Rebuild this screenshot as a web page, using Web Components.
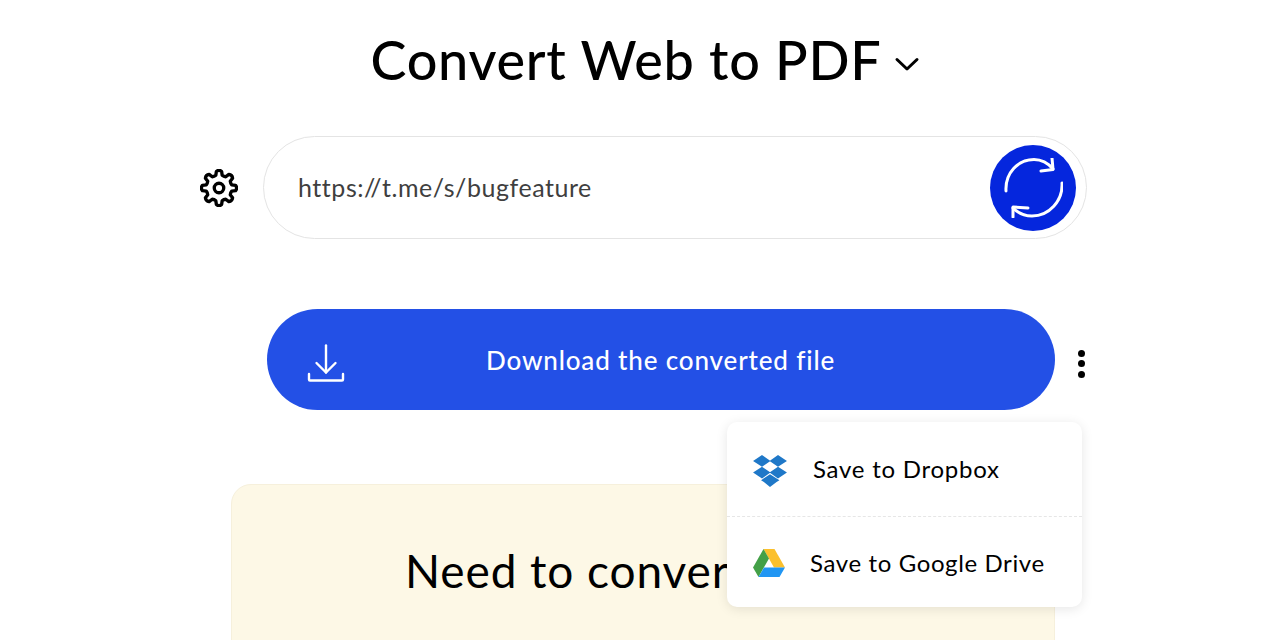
<!DOCTYPE html>
<html lang="en"><head><meta charset="utf-8"><title>Convert Web to PDF</title>
<style>
html,body{margin:0;padding:0;height:640px;overflow:hidden;background:#fff;font-family:Lato,"Noto Sans",sans-serif;color:#000}
</style></head><body>
<convert-page></convert-page>
<template id="t-page"><style>
:host{display:block;position:relative;width:1280px;height:640px;overflow:hidden}
.col{display:flex;flex-direction:column}
.url{margin:29px 0 0 200px}
.dl{margin:70px 0 0 267px}
.card{margin:74px 0 0 231px}
</style>
<div class="col">
<title-bar>Convert Web to PDF</title-bar>
<url-row class="url">https://t.me/s/bugfeature</url-row>
<download-row class="dl">Download the converted file</download-row>
<promo-card class="card">Need to convert</promo-card>
</div>
<save-menu></save-menu>
</template>
<template id="t-title"><style>
:host{display:flex;justify-content:center;align-items:center;height:107px;padding:12px 0 0 10px;box-sizing:border-box;gap:12px}
h1{margin:0;font:500 54px/95px Lato,"Noto Sans",sans-serif;color:#000;letter-spacing:.75px;white-space:nowrap}
svg{display:block;margin-top:9px}
</style><h1><slot></slot></h1>
<svg width="26" height="26" viewBox="0 0 26 26" fill="none" stroke="#000" stroke-width="3" stroke-linecap="round" stroke-linejoin="round"><path d="M3 8.500l10 9.500 10-9.500"/></svg></template>
<template id="t-url"><style>
:host{display:flex;align-items:center;gap:25px}
svg{display:block;flex:none}
.box{box-sizing:border-box;width:824px;height:103px;border:1px solid #e4e4e4;border-radius:52px;display:flex;align-items:center;justify-content:space-between;padding:0 10px 0 34px;background:#fff}
.t{font:400 25px/1 Lato,"Noto Sans",sans-serif;color:#3f3f3f;letter-spacing:.55px;margin-top:-1px}
.go{width:86px;height:86px;border-radius:50%;background:#0526dd;display:flex;align-items:center;justify-content:center}
</style>
<svg width="38" height="38" viewBox="0 0 24 24" fill="none" stroke="#000" stroke-width="2.1" stroke-linejoin="round"><path id="gear"/><circle cx="12" cy="12" r="3"/></svg>
<div class="box"><span class="t"><slot></slot></span><div class="go">
<svg width="60" height="60" viewBox="0 0 60 60" fill="none" stroke="#fff" stroke-width="3" stroke-linecap="round" stroke-linejoin="round"><path d="M3 33C2 15 15 1.500 31 1.500c7 0 14 3.500 19 9.500"/><path d="M49 0l1 11.500-12 1.500"/><path d="M59 25c1 18-13 33-30 33-7 0-14-3-19-8"/><path d="M10 59V49l15 1"/></svg>
</div></div></template>
<template id="t-dl"><style>
:host{display:flex;align-items:center}
.b{box-sizing:border-box;width:788px;height:101px;border-radius:51px;background:#2350e6;display:flex;align-items:center;position:relative;color:#fff}
svg.i{display:block;margin:6px 0 0 40px;flex:none}
.t{position:absolute;left:219px;top:0;font:500 26px/102px Lato,"Noto Sans",sans-serif;letter-spacing:.85px;white-space:nowrap}
.d{display:flex;flex-direction:column;gap:3.500px;margin:8px 0 0 23px}
.d i{display:block;width:7px;height:7px;border-radius:50%;background:#000}
</style><div class="b">
<svg class="i" width="38" height="38" viewBox="0 0 38 38" fill="none" stroke="#fff" stroke-width="2.4" stroke-linecap="round" stroke-linejoin="round"><path d="M19 1.500v27"/><path d="M9.500 19l9.500 9.500 9.500-9.500"/><path d="M2 30v5.500a1 1 0 0 0 1 1h32a1 1 0 0 0 1-1V30"/></svg>
<span class="t"><slot></slot></span></div>
<div class="d"><i></i><i></i><i></i></div></template>
<template id="t-card"><style>
:host{display:block;box-sizing:border-box;width:824px;height:260px;background:#fdf8e6;border:1px solid #f6f0dc;border-radius:20px;padding:55px 0 0 173px;font:400 46px/62px Lato,"Noto Sans",sans-serif;color:#000;letter-spacing:.9px;white-space:nowrap}
</style><slot></slot></template>
<template id="t-menu"><style>
:host{display:block;position:absolute;left:727px;top:422px;width:355px;height:185px;background:#fff;border-radius:10px;box-shadow:0 2px 12px rgba(0,0,0,.1)}
</style>
<save-item style="--pad:26px;--gap:26px;--h:95px;--ls:.75px"><svg slot="icon" width="34" height="32" viewBox="0 0 36 34" fill="#1f78c8" style="margin-top:3px"><path d="M9.500 0L0 6.300l9.500 6.200 9-6.200zM26.500 0l-9 6.300 9 6.200L36 6.300zM0 18.700l9.500 6.300 9-6.300-9-6.200zM26.500 12.500l-9 6.200 9 6.300 9.500-6.300zM18 20.500l-9.500 6.200 3 2L18 34l7-5.300 3-2z"/></svg>Save to Dropbox</save-item>
<save-item style="--pad:26px;--gap:25px;--h:92px;--border:none;"><svg slot="icon" width="32" height="28" viewBox="0 0 32 28" style="margin-top:0"><path d="M10.500 0h11l10.500 18.500H21z" fill="#fbc02d"/><path d="M10.500 0L0 18.500 5.500 28 16 9.500z" fill="#43a047"/><path d="M5.500 28h21L32 18.500H11z" fill="#2196f3"/></svg>Save to Google Drive</save-item>
</template>
<template id="t-item"><style>
:host{display:flex;align-items:center;box-sizing:border-box;height:var(--h);padding-left:var(--pad);gap:var(--gap);font:400 24px/1 Lato,"Noto Sans",sans-serif;letter-spacing:var(--ls,.62px);color:#000;white-space:nowrap;border-bottom:var(--border,1px dashed #e6e6e6)}
::slotted(svg){display:block;flex:none}
</style><slot name="icon"></slot><span><slot></slot></span></template>
<script>
function gearPath(){
  var p=function(r,a){a=(a-90)*Math.PI/180;return (12+r*Math.cos(a)).toFixed(2)+' '+(12+r*Math.sin(a)).toFixed(2);};
  var d='M'+p(8.3,-14);
  for(var i=0;i<8;i++){var a=i*45;
    d+=' L'+p(10.6,a-9)+' Q'+p(11.8,a)+' '+p(10.6,a+9)+' L'+p(8.3,a+14)+' Q'+p(7.8,a+22.5)+' '+p(8.3,a+31);
  }
  return d+'Z';
}
function def(name,tpl,init){customElements.define(name,class extends HTMLElement{constructor(){super();var s=this.attachShadow({mode:'open'});s.appendChild(document.getElementById(tpl).content.cloneNode(true));if(init)init(s);}});}
def('save-item','t-item');def('save-menu','t-menu');def('promo-card','t-card');def('download-row','t-dl');
def('url-row','t-url',function(s){s.getElementById('gear').setAttribute('d',gearPath());});
def('title-bar','t-title');def('convert-page','t-page');
</script>
</body></html>
